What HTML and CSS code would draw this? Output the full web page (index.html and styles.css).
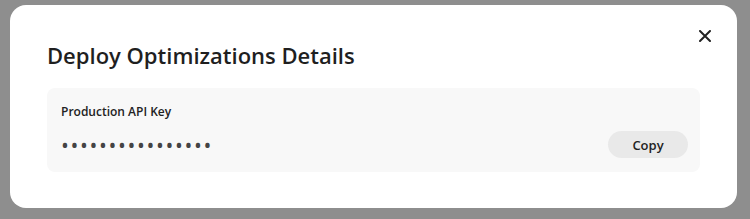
FILE: index.html
```html
<!DOCTYPE html>
<html>
<head>
<meta charset="utf-8">
<link rel="stylesheet" href="styles.css">
</head>
<body>
<div class="dialog">
  <div class="header">
    <h1 class="title">Deploy Optimizations Details</h1>
    <button class="close" aria-label="Close">
      <svg width="12" height="12" viewBox="0 0 12 12"><path d="M1 1L11 11M11 1L1 11" stroke="#222" stroke-width="2" stroke-linecap="round"/></svg>
    </button>
  </div>
  <div class="panel">
    <div class="label">Production API Key</div>
    <div class="row">
      <span class="dots">••••••••••••••••</span>
      <button class="copy">Copy</button>
    </div>
  </div>
</div>
</body>
</html>
```
FILE: styles.css
```css
* { box-sizing: border-box; }
html, body { margin: 0; padding: 0; }
body {
  background: #8e8e8e;
  width: 750px;
  height: 219px;
  overflow: hidden;
  font-family: "Open Sans", "Liberation Sans", sans-serif;
}
.dialog {
  margin: 5px 13px 0 10px;
  height: 203px;
  background: #fff;
  border-radius: 16px;
  padding: 20px 37px 0 37px;
}
.header {
  display: flex;
  align-items: flex-start;
  justify-content: space-between;
  height: 63px;
  padding-top: 16px;
}
.title {
  margin: 0;
  font-size: 22px;
  line-height: 28px;
  font-weight: 600;
  color: #1f1f1f;
}
.close {
  border: 0;
  background: none;
  padding: 0;
  margin: -11px -11px 0 0;
  width: 12px;
  height: 12px;
  display: flex;
}
.panel {
  background: #f8f8f8;
  border-radius: 8px;
  height: 84px;
  padding: 15px 12px 0 14px;
}
.label {
  font-size: 12px;
  line-height: 18px;
  font-weight: 600;
  color: #222;
}
.row {
  margin-top: 10px;
  display: flex;
  align-items: center;
  justify-content: space-between;
}
.dots {
  font-size: 21px;
  line-height: 18px;
  color: #444;
  letter-spacing: 1.6px;
}
.copy {
  border: 0;
  background: #e9e9e9;
  border-radius: 14px;
  width: 80px;
  height: 27px;
  font-family: inherit;
  font-size: 13px;
  font-weight: 600;
  color: #222;
  padding: 0;
}
```
